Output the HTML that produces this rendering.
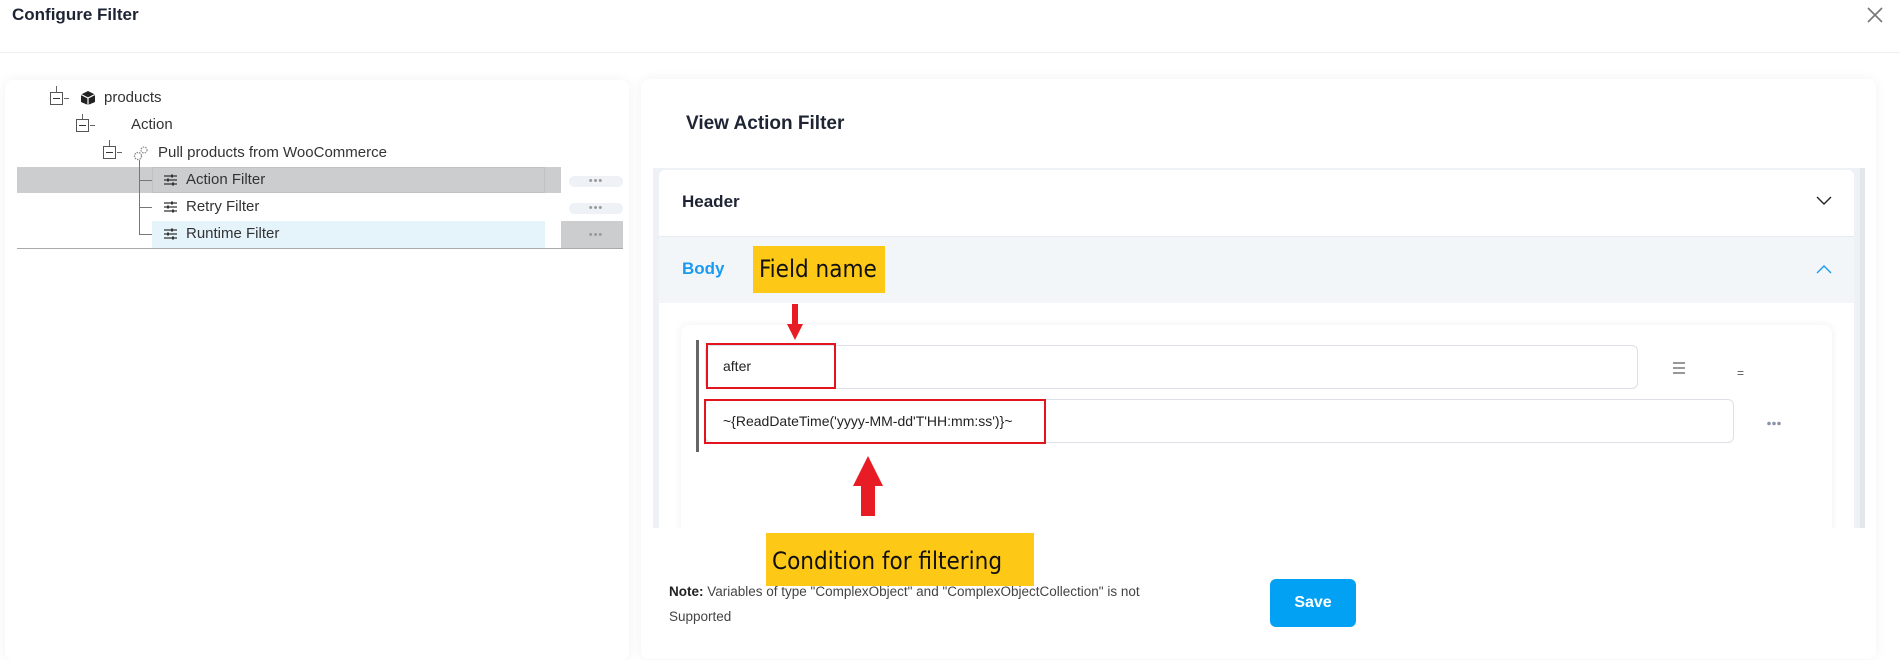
<!DOCTYPE html>
<html><head><meta charset="utf-8"><style>
*{box-sizing:border-box;margin:0;padding:0}
body{width:1900px;height:641px;overflow:hidden;background:#fff;font-family:"Liberation Sans",sans-serif;color:#222;position:relative}
.a{position:absolute;white-space:nowrap}
.title{left:12px;top:5px;font-size:17px;font-weight:bold;color:#1e2433}
.hline{left:0;top:52px;width:1900px;height:1px;background:#eceef1}
.panel{background:#fff;border-radius:8px;box-shadow:0 0 12px rgba(0,0,0,0.06)}
.tree{font-size:15px;color:#333}
.box{width:13px;height:13px;border:1px solid #555;background:#fff}
.box:after{content:"";position:absolute;left:2px;top:5px;width:7px;height:1px;background:#333}
.dots{border-radius:8px;background:#eef1f5;color:#999;font-size:11px;text-align:center;letter-spacing:1px;line-height:10px}
.yellow{background:#fec816;color:#111;font-size:24px;font-family:"DejaVu Sans Condensed","Liberation Sans",sans-serif;padding-left:6px}
.inp{border:1px solid #dde0e6;border-radius:6px;background:#fff}
.red{border:2px solid #e3141d}
</style></head><body>
<div class="a title">Configure Filter</div>
<svg class="a" style="left:1866px;top:6px" width="18" height="18" viewBox="0 0 18 18"><path d="M2 2L16 16M16 2L2 16" stroke="#777" stroke-width="1.6"/></svg>
<div class="a hline"></div>

<div class="a panel" style="left:5px;top:80px;width:624px;height:580px"></div>
<div class="a tree" style="left:0;top:0">
 <div class="a" style="left:56px;top:86px;width:1px;height:6px;background:#666"></div>
 <div class="a box" style="left:50px;top:92px"></div>
 <div class="a" style="left:64px;top:98px;width:5px;height:1px;background:#666"></div>
 <svg class="a" style="left:80px;top:90px" width="16" height="16" viewBox="0 0 16 16"><path d="M8 1L15 4.5V12L8 15L1 12V4.5Z" fill="#222"/><path d="M1 4.5L8 8L15 4.5M8 8V15" stroke="#fff" stroke-width="1.2" fill="none"/></svg>
 <div class="a" style="left:104px;top:89px">products</div>
 <div class="a" style="left:82px;top:114px;width:1px;height:6px;background:#666"></div>
 <div class="a box" style="left:76px;top:119px"></div>
 <div class="a" style="left:90px;top:125px;width:5px;height:1px;background:#666"></div>
 <div class="a" style="left:131px;top:116px">Action</div>
 <div class="a" style="left:109px;top:140px;width:1px;height:6px;background:#666"></div>
 <div class="a box" style="left:103px;top:146px"></div>
 <div class="a" style="left:117px;top:152px;width:5px;height:1px;background:#666"></div>
 <svg class="a" style="left:133px;top:145px" width="16" height="16" viewBox="0 0 16 16"><circle cx="5" cy="11" r="3.5" fill="none" stroke="#888" stroke-width="1.3" stroke-dasharray="1.5 1"/><circle cx="11" cy="5" r="3" fill="none" stroke="#888" stroke-width="1.2" stroke-dasharray="1.5 1"/></svg>
 <div class="a" style="left:158px;top:144px">Pull products from WooCommerce</div>
 <div class="a" style="left:17px;top:167px;width:544px;height:26px;background:#cbcdcf"></div>
 <div class="a" style="left:152px;top:167px;width:393px;height:26px;border:1px solid #bfc1c3"></div>
 <div class="a" style="left:139px;top:160px;width:1px;height:75px;background:#777"></div>
 <div class="a" style="left:139px;top:180px;width:13px;height:1px;background:#777"></div>
 <div class="a" style="left:139px;top:207px;width:13px;height:1px;background:#777"></div>
 <div class="a" style="left:139px;top:234px;width:13px;height:1px;background:#777"></div>
 <div class="a" style="left:152px;top:221px;width:393px;height:27px;background:#e5f3fa"></div>
 <div class="a" style="left:561px;top:221px;width:62px;height:27px;background:#cbcdcf"></div>
 <svg class="a" style="left:164px;top:174px" width="13" height="12" viewBox="0 0 13 12"><path d="M0 2H13M0 6H13M0 10H13" stroke="#333" stroke-width="1.3"/><rect x="7" y="0.5" width="2" height="3" fill="#333"/><rect x="3" y="4.5" width="2" height="3" fill="#333"/><rect x="8" y="8.5" width="2" height="3" fill="#333"/></svg>
 <svg class="a" style="left:164px;top:201px" width="13" height="12" viewBox="0 0 13 12"><path d="M0 2H13M0 6H13M0 10H13" stroke="#333" stroke-width="1.3"/><rect x="7" y="0.5" width="2" height="3" fill="#333"/><rect x="3" y="4.5" width="2" height="3" fill="#333"/><rect x="8" y="8.5" width="2" height="3" fill="#333"/></svg>
 <svg class="a" style="left:164px;top:228px" width="13" height="12" viewBox="0 0 13 12"><path d="M0 2H13M0 6H13M0 10H13" stroke="#333" stroke-width="1.3"/><rect x="7" y="0.5" width="2" height="3" fill="#333"/><rect x="3" y="4.5" width="2" height="3" fill="#333"/><rect x="8" y="8.5" width="2" height="3" fill="#333"/></svg>
 <div class="a" style="left:186px;top:171px">Action Filter</div>
 <div class="a" style="left:186px;top:198px">Retry Filter</div>
 <div class="a" style="left:186px;top:225px">Runtime Filter</div>
 <div class="a dots" style="left:569px;top:176px;width:54px;height:11px">•••</div>
 <div class="a dots" style="left:569px;top:203px;width:54px;height:11px">•••</div>
 <div class="a dots" style="left:569px;top:230px;width:54px;height:11px;background:none">•••</div>
 <div class="a" style="left:17px;top:248px;width:606px;height:1px;background:#aaa"></div>
</div>

<div class="a panel" style="left:641px;top:79px;width:1235px;height:580px"></div>
<div class="a" style="left:686px;top:113px;font-size:19px;font-weight:bold;color:#1e2433">View Action Filter</div>
<div class="a" style="left:653px;top:168px;width:1212px;height:360px;background:#eef2f6"></div>
<div class="a" style="left:659px;top:170px;width:1195px;height:358px;background:#fff;border-radius:6px 6px 0 0"></div>
<div class="a" style="left:1860px;top:168px;width:5px;height:360px;background:#e3e7ec"></div>
<div class="a" style="left:682px;top:192px;font-size:17px;font-weight:bold;color:#1e2433">Header</div>
<svg class="a" style="left:1816px;top:196px" width="16" height="10" viewBox="0 0 16 10"><path d="M1 1L8 8L15 1" stroke="#222" stroke-width="1.4" fill="none"/></svg>
<div class="a" style="left:659px;top:236px;width:1195px;height:67px;background:#f3f6f9;border-top:1px solid #e8ecf0"></div>
<div class="a" style="left:682px;top:259px;font-size:17px;font-weight:bold;color:#1a9bf0">Body</div>
<svg class="a" style="left:1816px;top:264px" width="16" height="10" viewBox="0 0 16 10"><path d="M1 9L8 2L15 9" stroke="#1a9bf0" stroke-width="1.4" fill="none"/></svg>
<div class="a" style="left:681px;top:325px;width:1151px;height:210px;background:#fff;border-radius:8px;box-shadow:0 0 8px rgba(0,0,0,0.07)"></div>
<div class="a" style="left:696px;top:340px;width:3px;height:112px;background:#666"></div>
<div class="a inp" style="left:705px;top:345px;width:933px;height:44px"></div>
<div class="a red" style="left:706px;top:343px;width:130px;height:46px"></div>
<div class="a" style="left:723px;top:358px;font-size:14px;color:#222">after</div>
<div class="a" style="left:1673px;top:362px;width:12px;height:2px;background:#999;box-shadow:0 5px 0 #999,0 10px 0 #999"></div>
<div class="a" style="left:1737px;top:366px;font-size:12px;color:#555">=</div>
<div class="a inp" style="left:705px;top:399px;width:1029px;height:44px"></div>
<div class="a red" style="left:704px;top:399px;width:342px;height:45px"></div>
<div class="a" style="left:723px;top:413px;font-size:14px;color:#222">~{ReadDateTime('yyyy-MM-dd'T'HH:mm:ss')}~</div>
<svg class="a" style="left:1766px;top:421px" width="16" height="5" viewBox="0 0 16 5"><circle cx="3" cy="2.5" r="1.8" fill="#8a93a8"/><circle cx="8" cy="2.5" r="1.8" fill="#8a93a8"/><circle cx="13" cy="2.5" r="1.8" fill="#8a93a8"/></svg>
<div class="a" style="left:641px;top:528px;width:1235px;height:113px;background:#fff"></div>

<div class="a yellow" style="left:753px;top:246px;width:132px;height:47px;line-height:47px">Field name</div>
<svg class="a" style="left:786px;top:304px" width="18" height="36" viewBox="0 0 18 36"><rect x="6" y="0" width="6" height="22" fill="#e81c24"/><path d="M1 20H17L9 36Z" fill="#e81c24"/></svg>
<svg class="a" style="left:852px;top:456px" width="32" height="60" viewBox="0 0 32 60"><path d="M16 0L31 30H1Z" fill="#e81c24"/><rect x="9" y="28" width="14" height="32" fill="#e81c24"/></svg>
<div class="a yellow" style="left:766px;top:533px;width:268px;height:53px;line-height:56px">Condition for filtering</div>
<div class="a" style="left:669px;top:579px;font-size:13.5px;color:#444;line-height:25px;width:600px"><b style="color:#222">Note:</b> Variables of type "ComplexObject" and "ComplexObjectCollection" is not<br>Supported</div>
<div class="a" style="left:1270px;top:579px;width:86px;height:48px;background:#03a1f4;border-radius:6px;color:#fff;font-weight:bold;font-size:16px;text-align:center;line-height:48px">Save</div>
</body></html>
